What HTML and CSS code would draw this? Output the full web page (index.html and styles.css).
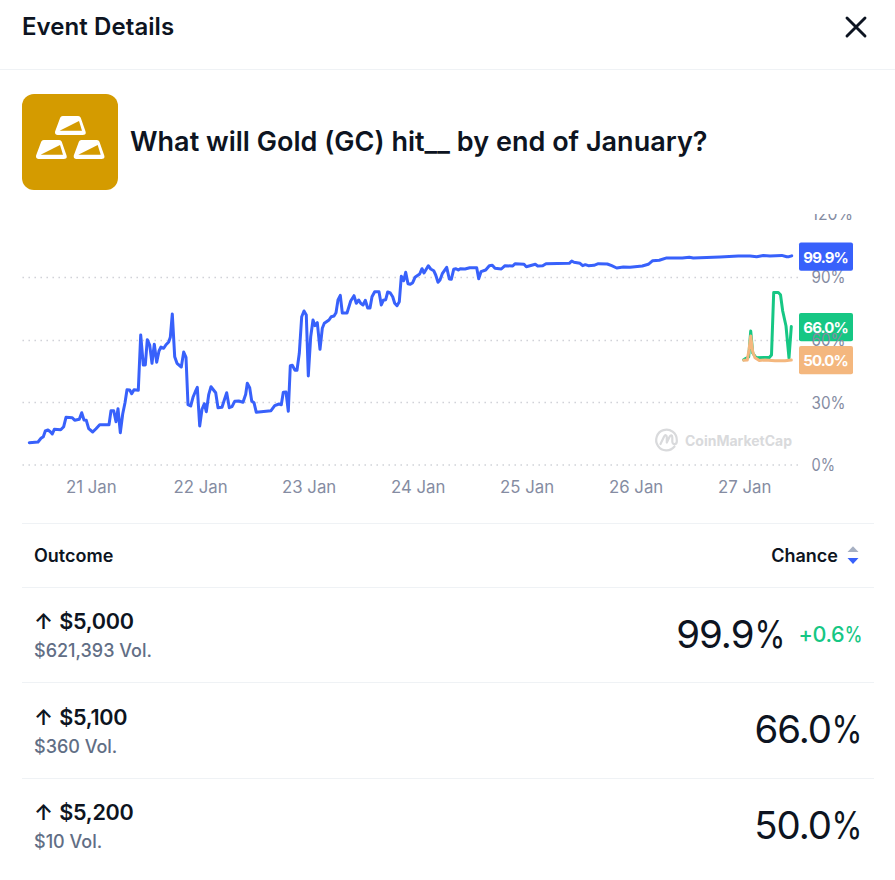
FILE: index.html
```html
<!DOCTYPE html>
<html lang="en">
  <head>
    <meta charset="UTF-8" />
    <meta name="viewport" content="width=device-width, initial-scale=1.0" />
    <title>Event Details</title>
    <link rel="stylesheet" href="styles.css">
  </head>
  <body>
    <header class="modal-header">
      <h1>Event Details</h1>
      <button class="close" aria-label="Close">
        <svg width="24" height="24" viewBox="0 0 24 24">
          <path d="M3 3l18 18M21 3l-18 18" />
        </svg>
      </button>
    </header>

    <main class="content">
      <div class="event">
        <svg class="event-icon" viewBox="0 0 96 96">
          <defs>
            <g id="bar">
              <path class="bar-body" d="M35.7 38.3L40.7 24.7H56.2L61 38.3Z" />
              <path class="bar-shade" d="M37.6 36.7L57 26.9L60 36.7Z" />
            </g>
          </defs>
          <use href="#bar" />
          <use href="#bar" x="-19" y="24" />
          <use href="#bar" x="18.7" y="24" />
        </svg>
        <h2>What will Gold (GC) hit__ by end of January?</h2>
      </div>

      <svg class="chart" width="851" height="290" viewBox="22 214 851 290">
        <g class="grid">
          <path d="M22.5 277.5H799M22.5 340.5H799M22.5 402.5H799M22.5 465H799" />
        </g>

        <g class="watermark">
          <path d="M674.5 446.5A10.3 10.3 0 1 1 676.8 440V441.5C676.8 444.8 672.3 445 672.3 441.5V437.5C672.3 434.8 670.8 434.6 669.7 436.6L666.8 442.5V437.2C666.8 434.8 665.2 434.5 664.1 436.6L660.5 444" />
          <text x="685" y="446" textLength="107">CoinMarketCap</text>
        </g>

        <polyline class="line blue" points="29.3,442.7 38,442 41,438.3 43.3,436.7 45.3,431 48,430 50.3,431.7 52.3,434 54.3,429.3 60.7,429.7 63.7,426.7 66,417.3 72.3,417.7 74.7,420.3 79.3,419.3 81.7,412.7 84,420 86.3,420.3 88.7,428.7 92.7,432 96,428.7 99.7,424.7 109,424.7 111,410.7 113.7,410.7 116,421.7 118,408.7 120.3,432.7 122.7,414 125,402.7 127,389.7 129.7,390 131.7,393.7 134,389.7 138.3,390.3 140.7,335 143.3,365 145.3,365 147.3,339.7 149.7,345 152,363.3 154.3,344.3 156.7,362.3 159,351 161,347 163.7,348.3 166,344.7 168.7,342 170.3,337.3 172.3,314 174.7,356.7 177,363.3 181.3,367 183.7,352 186,357.3 188,404.7 190.7,406 193,397.3 195.3,391.7 197.3,387.3 199.7,426 202,409.3 204.3,403.7 206.3,411.7 208.7,394.7 211,386.7 215.7,392.7 218,407.7 222,407.3 224.3,400 226.7,392.7 229.3,407.7 232,406.7 234.7,401.3 238.7,401 243,402.3 245.7,394.3 247.3,383.3 249.7,387.7 251.7,401 254,402.7 256.3,412.3 271,410.7 274.7,405.7 279,404 281.3,404.7 283.3,392.3 286,392 288.3,411.3 290.3,365.7 292.3,365.3 295,370.3 297,370.3 299.3,353.3 301.7,316.7 304,311 306.3,315 308.3,376 310.7,336.7 313,320 315,325.7 317.3,322.7 320,349.3 322.3,328.3 324.3,323.3 329,320 331.3,316.7 334,316 336,312.7 338,300 340.3,295.3 342.3,313 347,313 350.7,301 354,295.7 356.3,303.3 358.7,300 360.7,303.3 363,305 365.3,300.3 367.7,308 370,308 372,296.7 374.7,291.7 379,291.7 381.3,305 383.3,300.3 385.7,299.7 387.7,292 390.3,293 392.7,296.7 394.7,303.3 397,305.7 399.3,301.7 401.3,276.3 403.7,280.7 405.7,272.3 408,283.7 410.3,284.3 412.7,282.7 415,277.3 419.7,274 422,268.7 424,273 428.3,265.7 430.7,269 433.7,270.7 435.7,275 438,282.3 440,280 442.3,273.7 446.7,267.3 449.3,279 451.3,279.3 453.7,269.3 456,268.7 458.3,270 460.3,268.7 465,269 469.7,267.7 476.7,267.7 478.7,278.7 481,271.7 485.7,270 489.3,265.7 492.3,265.3 495,268.3 501.3,269 505,265.7 512.7,266 515,263.7 524,264.3 526.3,266.7 535.3,264.3 537.7,266 542.7,265.7 546,263.7 569.3,263.3 571.7,261 574,262.3 580,263.3 582.7,265.7 585.3,264.7 588.3,265.7 594,265.3 598.3,263.7 607.3,264 611.7,265.7 616.7,268 623.3,267 630,267.3 642.3,266 648.3,264.3 652.7,260.7 659.3,260.3 666.7,257.9 682.3,258 689.3,257.3 693.3,258 720,257 738.3,256 750,256 756.7,256.7 763.3,255.6 770,256 781.7,255.4 786.7,256.7 789,256.7 791.7,255.8" />
        <polyline class="line green" points="743.7,359.8 746,358.3 748.7,357 750.7,331 752.7,353 756,357.7 769.3,357.5 771.5,355 773.7,292.5 778.3,292.5 780.5,294.7 782.7,311 786,326 789,358 791.3,326.5" />
        <polyline class="line orange" points="743.7,360.3 747.3,360 749,350 750.7,336 752.7,351.7 755,357.7 759.3,360.5 765,360 775,360.8 785,360.8 791.3,360" />

        <g class="badge green">
          <rect x="799" y="313" width="54" height="28.3" rx="2" />
          <text x="803.3" y="333.3" textLength="45.5">66.0%</text>
        </g>
        <g class="axis">
          <text x="811.5" y="220.3" textLength="41.5" lengthAdjust="spacingAndGlyphs">120%</text>
          <text x="811.5" y="283" textLength="34" lengthAdjust="spacingAndGlyphs">90%</text>
          <text x="811.5" y="346" textLength="34" lengthAdjust="spacingAndGlyphs">60%</text>
          <text x="811.5" y="409" textLength="34" lengthAdjust="spacingAndGlyphs">30%</text>
          <text x="811.5" y="471" textLength="23.5" lengthAdjust="spacingAndGlyphs">0%</text>
          <text x="66" y="493">21 Jan</text>
          <text x="173.6" y="493">22 Jan</text>
          <text x="282" y="493">23 Jan</text>
          <text x="391" y="493">24 Jan</text>
          <text x="500" y="493">25 Jan</text>
          <text x="609" y="493">26 Jan</text>
          <text x="718" y="493">27 Jan</text>
        </g>
        <g class="badge orange">
          <rect x="799" y="346" width="54" height="28.3" rx="2" />
          <text x="803.3" y="366.3" textLength="45.5">50.0%</text>
        </g>
        <g class="badge blue">
          <rect x="799" y="242.5" width="54" height="28.3" rx="2" />
          <text x="803.3" y="262.5" textLength="45.5">99.9%</text>
        </g>
      </svg>

      <section class="outcomes">
        <div class="outcomes-head">
          <span>Outcome</span>
          <span class="sort">
            Chance
            <svg width="12" height="20" viewBox="0 0 12 20">
              <path class="up" d="M0.5 6L6 0.3L11.5 6Z" />
              <path class="down" d="M0.5 12H11.5L6 18Z" />
            </svg>
          </span>
        </div>
        <div class="row">
          <div class="outcome">
            <p class="name">↑ $5,000</p>
            <p class="volume">$621,393 Vol.</p>
          </div>
          <div class="chance">
            <div>99.9<span class="percent">%</span></div>
            <div class="change">+0.6<span class="percent">%</span></div>
          </div>
        </div>
        <div class="row">
          <div class="outcome">
            <p class="name">↑ $5,100</p>
            <p class="volume">$360 Vol.</p>
          </div>
          <div class="chance">
            <div>66.0<span class="percent">%</span></div>
          </div>
        </div>
        <div class="row">
          <div class="outcome">
            <p class="name">↑ $5,200</p>
            <p class="volume">$10 Vol.</p>
          </div>
          <div class="chance">
            <div>50.0<span class="percent">%</span></div>
          </div>
        </div>
      </section>
    </main>
  </body>
</html>
```
FILE: styles.css
```css
* {
  box-sizing: border-box;
}

body {
  margin: 0;
  height: 880px;
  overflow: hidden;
  background-color: #fff;
  color: #0d1421;
  font-family: Inter, sans-serif;
}

h1,
h2,
p {
  margin: 0;
}

.modal-header {
  display: flex;
  justify-content: space-between;
  align-items: flex-start;
  height: 70px;
  padding: 12px 27px 0 22px;
  border-bottom: 1px solid #eff2f5;
}

h1 {
  font-size: 24px;
  font-weight: 600;
  line-height: 30px;
  letter-spacing: 0.08px;
}

.close {
  display: flex;
  padding: 3px 0;
  border: none;
  background: none;
}

.close path {
  fill: none;
  stroke: #0d1421;
  stroke-width: 2.9;
  stroke-linecap: round;
}

.content {
  padding: 24px 21px 0 22px;
}

.event {
  display: flex;
  align-items: center;
  gap: 12px;
}

.event-icon {
  width: 96px;
  height: 96px;
  border-radius: 12px;
  background-color: #d49b00;
}

.bar-body {
  fill: #fff;
  stroke: #fff;
  stroke-width: 5.4;
  stroke-linejoin: round;
}

.bar-shade {
  fill: #d49b00;
}

h2 {
  padding-bottom: 2px;
  font-size: 27px;
  font-weight: 600;
  letter-spacing: 0.02px;
  white-space: nowrap;
}

.chart {
  display: block;
  margin-top: 24px;
  overflow: hidden;
}

.grid path {
  fill: none;
  stroke: #ccced4;
  stroke-width: 1.3;
  stroke-dasharray: 1.4 4.6;
}

.line {
  fill: none;
  stroke-width: 3;
  stroke-linejoin: round;
  stroke-linecap: round;
}

.line.blue {
  stroke: #3861fb;
}

.line.green {
  stroke: #16c784;
}

.line.orange {
  stroke: #f4b77e;
}

.axis {
  fill: #858ca2;
  font-size: 16.8px;
}

.badge text {
  fill: #fff;
  font-size: 15px;
  font-weight: 700;
}

.badge.blue rect {
  fill: #3861fb;
}

.badge.green rect {
  fill: #16c784;
}

.badge.orange rect {
  fill: #f4b77e;
}

.watermark path {
  fill: none;
  stroke: #d9dadc;
  stroke-width: 2.2;
  stroke-linecap: round;
  stroke-linejoin: round;
}

.watermark text {
  fill: #d9dadc;
  font-size: 14px;
  font-weight: 700;
}

.outcomes {
  margin-top: 19px;
  border-top: 1px solid #eff2f5;
}

.outcomes-head {
  display: flex;
  justify-content: space-between;
  align-items: center;
  height: 64px;
  padding: 0 15px 0 12px;
  border-bottom: 1px solid #eff2f5;
  font-size: 18px;
  font-weight: 600;
}

.sort {
  display: flex;
  align-items: center;
  gap: 9px;
}

.sort .up {
  fill: #a6b0c3;
}

.sort .down {
  fill: #3861fb;
}

.row {
  display: flex;
  justify-content: space-between;
  align-items: center;
  height: 95.4px;
  padding: 0 12px;
  border-bottom: 1px solid #eff2f5;
}

.row:last-child {
  border-bottom: none;
}

.outcome {
  padding-top: 2px;
}

.name {
  font-size: 21.6px;
  font-weight: 600;
  line-height: 29px;
  letter-spacing: -0.3px;
  word-spacing: 1.5px;
}

.volume {
  color: #616e85;
  font-size: 18px;
  font-weight: 500;
  line-height: 29px;
}

.chance {
  display: flex;
  align-items: center;
  gap: 14px;
  padding-bottom: 3px;
  font-size: 38.4px;
  letter-spacing: -1px;
}

.change {
  color: #16c784;
  font-size: 21.6px;
  font-weight: 500;
  letter-spacing: -0.4px;
}

.percent {
  display: inline-block;
  margin-left: -0.15em;
  transform: scaleX(0.82);
  transform-origin: right;
}
```
